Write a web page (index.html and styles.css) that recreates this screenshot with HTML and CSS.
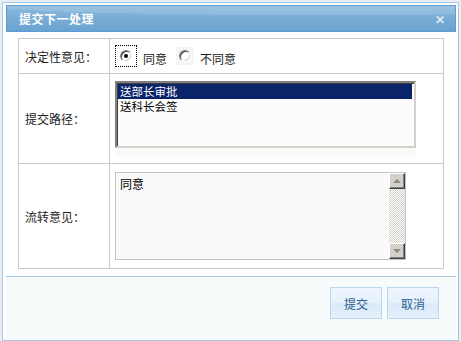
FILE: index.html
```html
<!DOCTYPE html>
<html lang="zh-CN">

<head>
  <meta charset="UTF-8">
  <meta name="viewport" content="width=device-width, initial-scale=1.0">
  <title>提交下一处理</title>
  <link rel="stylesheet" href="styles.css">
</head>

<body>
  <div class="dialog">
    <div class="title-bar">
      <span class="title">提交下一处理</span>
      <span class="close">&#x2715;</span>
    </div>

    <div class="dialog-body">
      <table class="form-table">
        <tr class="row-decide">
          <td class="label">决定性意见：</td>
          <td class="field">
            <div class="radios">
              <span class="radio-box focused"><span class="radio checked"></span></span>
              <span class="radio-text">同意</span>
              <span class="radio-box plain"><span class="radio"></span></span>
              <span class="radio-text">不同意</span>
            </div>
          </td>
        </tr>
        <tr class="row-route">
          <td class="label">提交路径：</td>
          <td class="field">
            <div class="listbox-wrap">
              <div class="listbox">
                <div class="option selected">送部长审批</div>
                <div class="option">送科长会签</div>
              </div>
            </div>
          </td>
        </tr>
        <tr class="row-opinion">
          <td class="label">流转意见：</td>
          <td class="field">
            <div class="memo">
              <textarea class="memo-text">同意</textarea>
              <div class="scrollbar">
                <div class="sb-btn up"><span class="arrow-up"></span></div>
                <div class="sb-track"></div>
                <div class="sb-btn down"><span class="arrow-down"></span></div>
              </div>
            </div>
          </td>
        </tr>
      </table>
    </div>

    <div class="dialog-foot">
      <button class="btn">提交</button>
      <button class="btn">取消</button>
    </div>
  </div>
</body>

</html>
```

FILE: styles.css
```css
html,
body {
  margin: 0;
  padding: 0;
}

body {
  background: #e9eef3;
  font-family: "Noto Sans CJK SC", "Liberation Sans", sans-serif;
  font-size: 12px;
  color: #222;
}

.dialog {
  margin: 2px 0 0 2px;
  width: 457px;
  height: 339px;
  box-sizing: border-box;
  padding: 2px 2px 0 3px;
  border: 1px solid #a4c8e6;
  background: #ffffff;
  display: flex;
  flex-direction: column;
}

/* 标题栏 */
.title-bar {
  height: 27px;
  box-sizing: border-box;
  border: 1px solid #5d9dd5;
  background:
    radial-gradient(ellipse 120% 60% at 70% 0%, rgba(255, 255, 255, 0.12) 60%, rgba(255, 255, 255, 0) 61%),
    linear-gradient(#8cbadd, #77abd6 55%, #6aa3d0);
  display: flex;
  align-items: center;
  justify-content: space-between;
  padding: 0 10px 0 12px;
}

.title {
  color: #ffffff;
  font-weight: bold;
  font-size: 12px;
  letter-spacing: 0.5px;
}

.close {
  color: #dde8f2;
  font-weight: bold;
  font-size: 12px;
}

.dialog-body {
  padding: 6px 12px 0 12px;
  height: 244px;
  box-sizing: border-box;
}

/* 表单 */
.form-table {
  width: 426px;
  border-collapse: collapse;
  border: 1px solid #c9c9c9;
}

.form-table td {
  border: 1px solid #c9c9c9;
  padding: 0;
  vertical-align: top;
}

.form-table td.label {
  width: 84px;
  padding-left: 6px;
  vertical-align: middle;
  color: #222;
}

.row-decide td {
  height: 34px;
}

.row-route td {
  height: 89px;
}

.row-opinion td {
  height: 104px;
}

.radios {
  display: flex;
  align-items: center;
  padding: 6px 0 0 5px;
}

.radio-box {
  display: flex;
  align-items: center;
  justify-content: center;
  box-sizing: border-box;
}

.radio-box.focused {
  width: 22px;
  height: 22px;
  border: 1px dotted #000;
}

.radio-box.plain {
  width: 18px;
  height: 18px;
  margin-left: 9px;
  background: #f5f5f5;
}

.radio {
  width: 12px;
  height: 12px;
  box-sizing: border-box;
  border-radius: 50%;
  border: 1px solid;
  border-color: #808080 #ffffff #ffffff #808080;
  box-shadow: inset 1px 1px 0 #404040, inset -1px -1px 0 #d4d0c8;
  background: #ffffff;
  position: relative;
}

.radio.checked::after {
  content: "";
  position: absolute;
  left: 3px;
  top: 3px;
  width: 4px;
  height: 4px;
  border-radius: 50%;
  background: #000;
}

.radio-text {
  margin-left: 6px;
  padding-top: 5px;
  line-height: 14px;
}

.listbox-wrap {
  margin: 7px 0 0 5px;
  width: 301px;
  height: 76px;
  background: #fafafa;
}

.listbox {
  height: 67px;
  box-sizing: border-box;
  border: 2px solid;
  border-color: #808080 #d4d0c8 #d4d0c8 #808080;
  box-shadow: inset 1px 1px 0 #404040;
  background: #fcfcfc;
  padding: 1px 2px 0 1px;
}

.option {
  height: 15px;
  line-height: 15px;
  font-size: 11.5px;
  padding-left: 2px;
  color: #000;
}

.option.selected {
  background: #0a246a;
  color: #ffffff;
}

.memo {
  margin: 8px 0 0 5px;
  width: 291px;
  height: 88px;
  box-sizing: border-box;
  border: 1px solid #c4c4c4;
  background: #fafafa;
  display: flex;
}

.memo-text {
  flex: 1;
  border: none;
  background: transparent;
  resize: none;
  outline: none;
  overflow: hidden;
  font-family: inherit;
  font-size: 12px;
  color: #000;
  padding: 2px 4px;
  margin: 0;
}

.scrollbar {
  width: 16px;
  display: flex;
  flex-direction: column;
}

.sb-btn {
  height: 16px;
  box-sizing: border-box;
  background: #d4d0c8;
  border: 1px solid;
  border-color: #ffffff #404040 #404040 #ffffff;
  box-shadow: inset -1px -1px 0 #808080;
  display: flex;
  align-items: center;
  justify-content: center;
}

.sb-track {
  flex: 1;
  background-color: #f2f2f2;
  background-image: repeating-conic-gradient(#d4d0c8 0 25%, #ffffff 0 50%);
  background-size: 2px 2px;
}

.arrow-up {
  width: 0;
  height: 0;
  border-left: 4px solid transparent;
  border-right: 4px solid transparent;
  border-bottom: 4px solid #8a8a8a;
}

.arrow-down {
  width: 0;
  height: 0;
  border-left: 4px solid transparent;
  border-right: 4px solid transparent;
  border-top: 4px solid #8a8a8a;
}

/* 底部按钮 */
.dialog-foot {
  flex: 1;
  border-top: 1px solid #a9cde6;
  background: #f8fbfc;
  display: flex;
  justify-content: flex-end;
  align-items: flex-start;
  gap: 5px;
  padding: 10px 17px 0 0;
}

.btn {
  width: 52px;
  height: 32px;
  border: 1px solid #b9d6ee;
  background: linear-gradient(#eef6fd, #e6f1fc 50%, #dbeaf8 52%, #e4f0fb);
  color: #2c5f92;
  font-family: inherit;
  font-size: 12px;
  padding: 0;
  cursor: pointer;
}
```
